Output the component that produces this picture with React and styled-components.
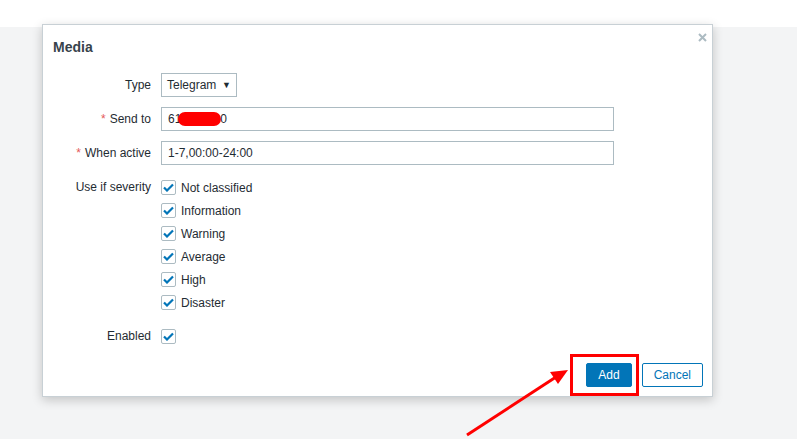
import styled, { createGlobalStyle } from "styled-components";

const GlobalStyle = createGlobalStyle`
  html, body {
    margin: 0;
    padding: 0;
    background: #f3f4f5;
    font-family: "Liberation Sans", Arial, sans-serif;
  }
`;

const Page = styled.div`
  position: relative;
  width: 797px;
  height: 439px;
  overflow: hidden;
  display: flex;
  flex-direction: column;
`;

const TopBar = styled.div`
  height: 27px;
  background: #ffffff;
`;

const Backdrop = styled.div`
  flex: 1;
  background: #f3f4f5;
`;

const Dialog = styled.div`
  position: absolute;
  left: 42px;
  top: 24px;
  width: 671px;
  box-sizing: border-box;
  background: #ffffff;
  border: 1px solid #c8d0d5;
  box-shadow: 0 3px 10px rgba(0, 0, 0, 0.2);
  color: #1f2c33;
  font-size: 12px;
`;

const Header = styled.div`
  padding: 10px 10px 0;
  line-height: 24px;
  font-size: 14px;
  font-weight: bold;
  color: #37434b;
`;

const Close = styled.span`
  position: absolute;
  top: 4px;
  right: 2px;
  width: 16px;
  height: 16px;
  display: flex;
  align-items: center;
  justify-content: center;
`;

const Form = styled.div`
  padding: 14px 10px 0;
  display: flex;
  flex-direction: column;
  gap: 10px;
`;

const Row = styled.div`
  display: flex;
  align-items: ${({ $top }) => ($top ? "flex-start" : "center")};
  margin-top: ${({ $offset }) => $offset || 0}px;
`;

const Label = styled.div`
  width: 108px;
  padding-right: 10px;
  box-sizing: border-box;
  text-align: right;
  line-height: ${({ $h }) => $h || 24}px;
  white-space: nowrap;
`;

const Asterisk = styled.span`
  color: #e45959;
  margin-right: 4px;
`;

const Select = styled.div`
  width: 76px;
  height: 24px;
  box-sizing: border-box;
  border: 1px solid #acbbc2;
  display: flex;
  align-items: center;
  justify-content: space-between;
  padding: 0 5px 0 5px;
  font-size: 12px;
`;

const Caret = styled.span`
  font-size: 9px;
  line-height: 1;
`;

const Input = styled.div`
  width: 453px;
  height: 24px;
  box-sizing: border-box;
  border: 1px solid #acbbc2;
  display: flex;
  align-items: center;
  padding-left: 6px;
  white-space: nowrap;
`;

const Redact = styled.span`
  display: inline-block;
  width: 43px;
  height: 14px;
  margin-left: -3px;
  margin-right: -1px;
  background: #ff0000;
  border-radius: 7px;
`;

const CheckList = styled.div`
  display: flex;
  flex-direction: column;
`;

const CheckItem = styled.div`
  height: 23px;
  display: flex;
  align-items: center;
  gap: 5px;
`;

const Box = styled.span`
  width: 15px;
  height: 15px;
  box-sizing: border-box;
  border: 1px solid #acbbc2;
  border-radius: 2px;
  display: flex;
  align-items: center;
  justify-content: center;
  background: #fff;
`;

const Footer = styled.div`
  display: flex;
  justify-content: flex-end;
  gap: 10px;
  padding: 15px 9px 9px;
`;

const Button = styled.button`
  height: 24px;
  padding: 0 11px;
  font-family: "Liberation Sans", Arial, sans-serif;
  font-size: 12px;
  border-radius: 2px;
  border: 1px solid #0275b8;
  background: ${({ $primary }) => ($primary ? "#0275b8" : "#ffffff")};
  color: ${({ $primary }) => ($primary ? "#ffffff" : "#0275b8")};
`;

const Highlight = styled.div`
  position: absolute;
  left: 570px;
  top: 354px;
  width: 69px;
  height: 42px;
  box-sizing: border-box;
  border: 3px solid #ff0000;
`;

const Overlay = styled.svg`
  position: absolute;
  left: 0;
  top: 0;
  pointer-events: none;
`;

const Check = () => (
  <Box>
    <svg width="11" height="9" viewBox="0 0 11 9">
      <path d="M1 4.5 L4 7.5 L10 1.5" fill="none" stroke="#0275b8" strokeWidth="2.2" />
    </svg>
  </Box>
);

const severities = ["Not classified", "Information", "Warning", "Average", "High", "Disaster"];

export default function App() {
  return (
    <Page>
      <GlobalStyle />
      <TopBar />
      <Backdrop />
      <Dialog>
        <Header>Media</Header>
        <Close>
          <svg width="9" height="9" viewBox="0 0 9 9">
            <path d="M1 1 L8 8 M8 1 L1 8" stroke="#acbbc2" strokeWidth="2" />
          </svg>
        </Close>
        <Form>
          <Row>
            <Label>Type</Label>
            <Select>
              <span>Telegram</span>
              <Caret>▼</Caret>
            </Select>
          </Row>
          <Row>
            <Label><Asterisk>*</Asterisk>Send to</Label>
            <Input>61<Redact />0</Input>
          </Row>
          <Row>
            <Label><Asterisk>*</Asterisk>When active</Label>
            <Input>1-7,00:00-24:00</Input>
          </Row>
          <Row $top $offset={1}>
            <Label $h={23}>Use if severity</Label>
            <CheckList>
              {severities.map((s) => (
                <CheckItem key={s}>
                  <Check />
                  <span>{s}</span>
                </CheckItem>
              ))}
            </CheckList>
          </Row>
          <Row $offset={1}>
            <Label $h={23}>Enabled</Label>
            <CheckItem>
              <Check />
            </CheckItem>
          </Row>
        </Form>
        <Footer>
          <Button $primary>Add</Button>
          <Button>Cancel</Button>
        </Footer>
      </Dialog>
      <Highlight />
      <Overlay width="797" height="439">
        <line x1="467" y1="435" x2="556" y2="377" stroke="#ff0000" strokeWidth="3" />
        <polygon points="568,370 550,372 558,384" fill="#ff0000" />
      </Overlay>
    </Page>
  );
}
